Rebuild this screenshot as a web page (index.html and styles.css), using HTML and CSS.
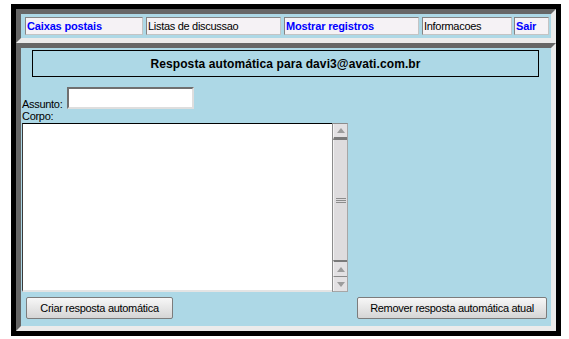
FILE: index.html
```html
<!DOCTYPE html>
<html lang="pt">
<head>
    <meta charset="UTF-8">
    <title>Resposta automática</title>
    <link rel="stylesheet" href="styles.css">
</head>
<body>
    <div class="window">
        <div class="frame frame-top">
            <div class="menu">
                <a class="menu-item link w-caixas">Caixas postais</a>
                <span class="menu-item w-listas">Listas de discussao</span>
                <a class="menu-item link w-mostrar">Mostrar registros</a>
                <span class="menu-item w-info">Informacoes</span>
                <a class="menu-item link w-sair">Sair</a>
            </div>
        </div>

        <div class="frame frame-main">
            <div class="title-box">Resposta automática para davi3@avati.com.br</div>

            <div class="field-row">
                <label class="field-label" for="assunto">Assunto:</label>
                <input class="text-input" id="assunto" type="text">
            </div>
            <div class="field-label corpo">Corpo:</div>

            <div class="editor">
                <textarea class="editor-text"></textarea>
                <div class="scrollbar">
                    <div class="sb-btn sb-top">
                        <svg width="8" height="5" viewBox="0 0 8 5"><polygon points="0,5 8,5 4,0" fill="#9c9c9c"/></svg>
                    </div>
                    <div class="sb-thumb">
                        <span class="grip"></span>
                        <span class="grip"></span>
                        <span class="grip"></span>
                    </div>
                    <div class="sb-btn sb-up">
                        <svg width="8" height="5" viewBox="0 0 8 5"><polygon points="0,5 8,5 4,0" fill="#9c9c9c"/></svg>
                    </div>
                    <div class="sb-btn sb-down">
                        <svg width="8" height="5" viewBox="0 0 8 5"><polygon points="0,0 8,0 4,5" fill="#9c9c9c"/></svg>
                    </div>
                </div>
            </div>

            <div class="actions">
                <button class="btn btn-create">Criar resposta automática</button>
                <button class="btn btn-remove">Remover resposta automática atual</button>
            </div>
        </div>
    </div>
</body>
</html>
```

FILE: styles.css
```css
body {
    margin: 0;
    background: #fff;
    font-family: "Liberation Sans", Arial, sans-serif;
    color: #000;
}
.window {
    width: 550px;
    height: 332px;
    margin: 4px 0 0 11px;
    border: 5px solid #000;
    box-sizing: border-box;
    display: flex;
    flex-direction: column;
}
.frame {
    border: 5px solid;
    border-color: #666 #ebebeb #ebebeb #666;
    background: #add8e6;
}
.frame-top {
    height: 34px;
    box-sizing: border-box;
}
.frame-main {
    flex: 1;
    display: flex;
    flex-direction: column;
}

/* menu */
.menu {
    display: flex;
    gap: 3px;
    padding: 3px 0 0 4px;
}
.menu-item {
    height: 18px;
    box-sizing: border-box;
    border: 1px solid;
    border-color: #858585 #c4c4c4 #c4c4c4 #858585;
    background: #f5f2f5;
    padding: 0 1px;
    font-size: 11px;
    line-height: 16px;
    letter-spacing: -0.3px;
    white-space: nowrap;
}
.link {
    color: #0000ff;
    font-weight: bold;
    letter-spacing: -0.15px;
    text-decoration: none;
}
.w-caixas { width: 118px; }
.w-listas { width: 135px; }
.w-mostrar { width: 135px; }
.w-info { width: 90px; }
.w-sair { width: 35px; margin-left: -1px; }

/* main */
.title-box {
    margin: 2px 12px 0 11px;
    height: 27px;
    box-sizing: border-box;
    border: 1px solid #000;
    display: flex;
    align-items: center;
    justify-content: center;
    font-size: 12px;
    font-weight: bold;
    letter-spacing: 0.1px;
}
.field-row {
    display: flex;
    align-items: flex-end;
    gap: 5px;
    margin-top: 10px;
    padding-left: 1px;
}
.field-label {
    font-size: 11px;
    line-height: 13px;
    letter-spacing: -0.3px;
}
.field-row .field-label {
    margin-bottom: -2px;
}
.corpo {
    padding-left: 1px;
    line-height: 14px;
}
.text-input {
    width: 127px;
    height: 22px;
    box-sizing: border-box;
    margin: 0;
    border: 2px solid;
    border-color: #707070 #dedede #dedede #707070;
    background: #fff;
    outline: none;
}

.editor {
    margin-left: 1px;
    width: 326px;
    height: 169px;
    display: flex;
}
.editor-text {
    flex: 1;
    margin: 0;
    resize: none;
    overflow: hidden;
    outline: none;
    border: none;
    border-top: 1px solid #000;
    border-left: 1px solid #3a3a3a;
    border-bottom: 2px solid #e4e4e4;
    background: #fff;
}
.scrollbar {
    width: 16px;
    box-sizing: border-box;
    display: flex;
    flex-direction: column;
    border: 1px solid;
    border-color: #8c8c8c #a6a6a6 #a6a6a6 #8c8c8c;
    background: #d9d7d9;
}
.sb-btn {
    display: flex;
    align-items: center;
    justify-content: center;
    background: #e3e1e3;
    border-left: 1px solid #f4f4f4;
}
.sb-top {
    height: 13px;
    border-bottom: 3px solid #7a7a7a;
}
.sb-up {
    height: 14px;
    border-top: 2px solid #7a7a7a;
    border-bottom: 1px solid #8a8a8a;
}
.sb-down {
    height: 14px;
}
.sb-thumb {
    flex: 1;
    display: flex;
    flex-direction: column;
    align-items: center;
    justify-content: center;
    gap: 1px;
    background: #dedcde;
    border-left: 1px solid #f4f4f4;
}
.grip {
    width: 10px;
    height: 1px;
    background: #8c8c8c;
}

.actions {
    display: flex;
    justify-content: space-between;
    margin-top: 5px;
    padding: 0 4px 0 5px;
}
.btn {
    height: 22px;
    padding: 0;
    border: 1px solid #7c7c7c;
    border-radius: 2px;
    background: linear-gradient(#f7f7f7, #d5d5d5);
    font-family: "Liberation Sans", Arial, sans-serif;
    font-size: 11px;
    letter-spacing: -0.3px;
    color: #000;
}
.btn-create { width: 147px; }
.btn-remove { width: 190px; }
```
